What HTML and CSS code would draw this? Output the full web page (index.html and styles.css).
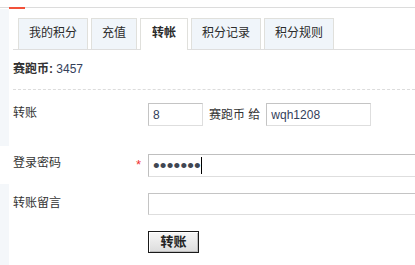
FILE: index.html
```html
<!DOCTYPE html>
<html lang="zh-CN">
<head>
<meta charset="utf-8">
<title>转帐</title>
<link rel="stylesheet" href="styles.css">
</head>
<body>
<div class="topline"><span class="topline-mark"></span></div>
<div class="panel">
  <ul class="tabs">
    <li class="tab">我的积分</li>
    <li class="tab">充值</li>
    <li class="tab tab-active">转帐</li>
    <li class="tab">积分记录</li>
    <li class="tab">积分规则</li>
  </ul>
  <p class="balance"><b>赛跑币:</b> <span class="balance-num">3457</span></p>
  <form class="transfer">
    <div class="label">转账</div>
    <div class="field">
      <input class="input input-amount" type="text" value="8">
      <span class="unit">赛跑币 给</span>
      <input class="input input-user" type="text" value="wqh1208">
    </div>
    <div class="label label-pass">登录密码<span class="req">*</span></div>
    <div class="field field-clip">
      <div class="input input-wide input-pass"><span class="dots">•••••••</span><span class="caret"></span></div>
    </div>
    <div class="label">转账留言</div>
    <div class="field field-clip">
      <input class="input input-wide input-msg" type="text" value="">
    </div>
    <div class="label"></div>
    <div class="field">
      <button class="btn" type="button">转账</button>
    </div>
  </form>
</div>
</body>
</html>
```
FILE: styles.css
```css
html, body {
  margin: 0;
  padding: 0;
  background: #fff;
}
body {
  width: 415px;
  height: 265px;
  overflow: hidden;
  font-family: "Liberation Sans", "Noto Sans CJK SC", sans-serif;
  font-size: 12px;
  color: #333;
  background-image: linear-gradient(#f4f7fa, #f4f7fa), linear-gradient(#f4f7fa, #f4f7fa);
  background-size: 9px 137px, 9px 82px;
  background-position: 0 9px, 0 184px;
  background-repeat: no-repeat;
}
.topline {
  margin-top: 7px;
  height: 1px;
  background: #dcdcdc;
  display: flex;
}
.topline-mark {
  margin-left: 9px;
  width: 16px;
  height: 2px;
  background: #f2513a;
}
.panel {
  padding-left: 13px;
  padding-top: 10px;
}
.tabs {
  list-style: none;
  margin: 0;
  padding: 0 0 0 5px;
  display: flex;
  gap: 3px;
  border-bottom: 1px solid #dedede;
  height: 31px;
}
.tab {
  box-sizing: border-box;
  height: 31px;
  line-height: 29px;
  padding: 0 10px;
  border: 1px solid #e0e0dc;
  border-bottom: none;
  background: #f0f5fa;
  color: #2b2b2b;
  font-size: 12px;
}
.tab-active {
  height: 32px;
  background: #fff;
  padding: 0 11px;
  font-weight: bold;
  margin-bottom: -1px;
}
.balance {
  margin: 9px 0 0 0;
  line-height: 20px;
  padding-bottom: 10px;
  border-bottom: 1px dashed #dcdcdc;
}
.balance b {
  font-weight: bold;
  color: #333;
}
.balance-num {
  color: #34405a;
}
.transfer {
  margin-top: 13px;
  display: grid;
  grid-template-columns: 135px 1fr;
  row-gap: 16px;
}
.label {
  line-height: 20px;
  display: flex;
  justify-content: space-between;
  padding-right: 7px;
}
.req {
  color: #f03030;
  font-size: 13px;
  line-height: 24px;
  font-family: "Liberation Sans", sans-serif;
}
.field {
  display: flex;
  align-items: center;
  white-space: nowrap;
  min-width: 0;
}
.field-clip {
  overflow: hidden;
}
.input {
  box-sizing: border-box;
  height: 23px;
  margin: 0;
  padding: 0 4px;
  border: 1px solid;
  border-color: #c4c4c4 #dedede #dedede #c4c4c4;
  font-family: "Liberation Sans", sans-serif;
  font-size: 12px;
  color: #34405a;
  background: #fff;
  outline: none;
}
.input-amount {
  width: 55px;
}
.unit {
  margin: 0 6px 0 6px;
  line-height: 20px;
}
.input-user {
  width: 105px;
}
.transfer .label:nth-child(1),
.transfer .field:nth-child(2) {
  margin-bottom: 11px;
}
.input-wide {
  width: 290px;
  flex: none;
}
.input-pass {
  display: flex;
  align-items: center;
  border-color: #bfbfbf #dedede #dedede #bfbfbf;
}
.dots {
  font-size: 19px;
  line-height: 21px;
  color: #404652;
  letter-spacing: 0.2px;
}
.caret {
  width: 1px;
  height: 17px;
  background: #000;
}
.input-msg {
  height: 22px;
}
.btn {
  box-sizing: border-box;
  width: 51px;
  height: 22px;
  padding: 0;
  border: 1px solid #1a1a1a;
  box-shadow: inset 1px 1px 0 #fff, inset -1px -1px 0 #bcbcbc;
  background: linear-gradient(#f7f7f7, #dcdcdc);
  font-family: "Liberation Sans", "Noto Sans CJK SC", sans-serif;
  font-size: 13px;
  font-weight: bold;
  color: #222;
  line-height: 20px;
}
```
